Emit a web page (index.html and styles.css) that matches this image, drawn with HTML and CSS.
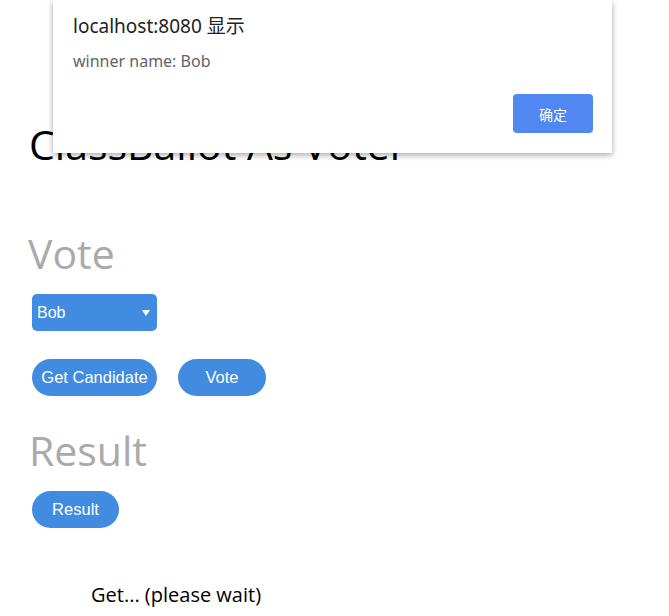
FILE: index.html
```html
<!DOCTYPE html>
<html>
<head>
<meta charset="utf-8">
<link rel="stylesheet" href="styles.css">
</head>
<body>
<main class="page">
  <h1 class="title">ClassBallot As Voter</h1>
  <h2 class="section section-vote">Vote</h2>
  <div class="select">
    <span>Bob</span>
    <svg class="arrow" width="8" height="6" viewBox="0 0 8 6"><polygon points="0,0 8,0 4,6" fill="#fff"/></svg>
  </div>
  <div class="btn-row">
    <button class="btn btn-candidate">Get Candidate</button>
    <button class="btn btn-vote">Vote</button>
  </div>
  <h2 class="section section-result">Result</h2>
  <div class="btn-row single">
    <button class="btn btn-result">Result</button>
  </div>
  <p class="status">Get... (please wait)</p>
</main>
<div class="dialog">
  <div class="dialog-title">localhost:8080 显示</div>
  <div class="dialog-msg">winner name: Bob</div>
  <div class="dialog-actions">
    <button class="dialog-ok">确定</button>
  </div>
</div>
</body>
</html>
```
FILE: styles.css
```css
html, body {
  margin: 0;
  padding: 0;
  background: #fff;
}
body {
  width: 669px;
  height: 616px;
  overflow: hidden;
  position: relative;
  font-family: "Open Sans", "Noto Sans", sans-serif;
}
.page {
  display: flex;
  flex-direction: column;
  align-items: flex-start;
  padding: 120px 0 0 28px;
}
.title {
  margin: 0;
  font-size: 41px;
  line-height: 48px;
  font-weight: 400;
  color: #000;
  padding-left: 1px;
}
.section {
  margin: 0;
  font-size: 41px;
  line-height: 48px;
  font-weight: 400;
  color: #aaa;
}
.section-vote {
  margin-top: 61px;
}
.section-result {
  margin-top: 30px;
  padding-left: 1px;
}
.select {
  margin-top: 17px;
  margin-left: 4px;
  width: 125px;
  height: 37px;
  box-sizing: border-box;
  background: #418ce0;
  border-radius: 5px;
  color: #fff;
  font-family: "Liberation Sans", Arial, sans-serif;
  font-size: 16px;
  display: flex;
  align-items: center;
  justify-content: space-between;
  padding: 0 7px 0 5px;
}
.arrow {
  display: block;
}
.btn-row {
  margin-top: 28px;
  margin-left: 4px;
  display: flex;
  gap: 21px;
}
.btn-row.single {
  margin-top: 17px;
}
.btn {
  height: 37px;
  border: none;
  border-radius: 19px;
  background: #418ce0;
  color: #fff;
  font-family: "Liberation Sans", Arial, sans-serif;
  font-size: 16.5px;
  padding: 0;
  display: flex;
  align-items: center;
  justify-content: center;
}
.btn-candidate { width: 125px; }
.btn-vote { width: 88px; }
.btn-result { width: 87px; }
.status {
  margin: 55px 0 0 63px;
  font-size: 20px;
  line-height: 24px;
  color: #000;
}
.dialog {
  position: absolute;
  left: 53px;
  top: 0;
  width: 559px;
  height: 153px;
  background: #fff;
  box-shadow: 0 2px 6px rgba(0,0,0,0.35);
  box-sizing: border-box;
  padding: 14px 19px 0 20px;
  font-family: "Noto Sans", "Noto Sans CJK SC", sans-serif;
}
.dialog-title {
  font-size: 19px;
  line-height: 24px;
  color: #202124;
}
.dialog-msg {
  margin-top: 13px;
  font-size: 16px;
  line-height: 20px;
  color: #5f6368;
}
.dialog-actions {
  display: flex;
  justify-content: flex-end;
  margin-top: 23px;
}
.dialog-ok {
  width: 80px;
  height: 39px;
  border: none;
  border-radius: 4px;
  background: #5087f0;
  color: #fff;
  font-family: "Noto Sans CJK SC", sans-serif;
  font-size: 14px;
  padding: 0;
}
```
